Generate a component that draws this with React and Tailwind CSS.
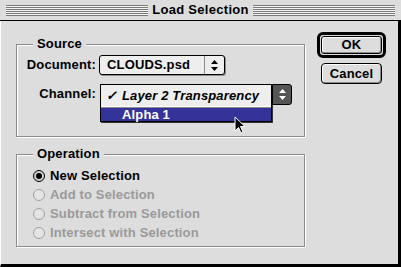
function Arrows({ color = "#000" }) {
  return (
    <svg width="7" height="11" viewBox="0 0 7 11">
      <path d="M3.5 0 L7 4 H0 Z" fill={color} />
      <path d="M0 7 H7 L3.5 11 Z" fill={color} />
    </svg>
  );
}

function Radio({ checked, disabled, label }) {
  return (
    <div className="flex items-center gap-[5px] h-[19px]">
      <div
        className={`w-[12px] h-[12px] rounded-full border flex items-center justify-center ${
          disabled ? "border-[#a0a0a0] bg-[#e4e4e4]" : "border-black bg-[#cfcfcf]"
        }`}
      >
        {checked && <div className="w-[6px] h-[6px] rounded-full bg-black" />}
      </div>
      <span className={disabled ? "text-[#9a9a9a]" : "text-black"}>{label}</span>
    </div>
  );
}

function Group({ title, className, children }) {
  return (
    <div
      className={`relative border border-[#8c8c8c] shadow-[1px_1px_0_#fff,inset_1px_1px_0_#fff] ${className}`}
    >
      <div className="absolute -top-[9px] left-[16px] px-[4px] bg-[#dddddd] leading-[16px]">{title}</div>
      {children}
    </div>
  );
}

function Cursor() {
  return (
    <svg width="12" height="18" viewBox="0 0 12 18" className="absolute left-[234px] top-[116px]">
      <path d="M1 1 V15 L4.5 11.5 L7 17 L9 16 L6.5 10.5 H11 Z" fill="#000" stroke="#fff" strokeWidth="1" />
    </svg>
  );
}

export default function App() {
  return (
    <div
      className="relative w-[401px] h-[267px] bg-[#dddddd] text-[13px] tracking-[0.15px] font-bold text-black overflow-hidden"
      style={{ fontFamily: '"Liberation Sans", Arial, sans-serif' }}
    >
      {/* title bar */}
      <div className="h-[21px] flex items-center px-[6px] border-b border-black bg-[#dddddd]">
        <div className="flex-1 h-[11px] bg-[repeating-linear-gradient(to_bottom,#7a7a7a_0px,#7a7a7a_1px,#f4f4f4_1px,#f4f4f4_2px)]" />
        <div className="px-[4px] text-[13px] tracking-[0.3px]">Load Selection</div>
        <div className="flex-1 h-[11px] bg-[repeating-linear-gradient(to_bottom,#7a7a7a_0px,#7a7a7a_1px,#f4f4f4_1px,#f4f4f4_2px)]" />
      </div>

      {/* body */}
      <div className="h-[246px] flex border-l border-l-white border-r-[3px] border-r-black border-b-[3px] border-b-black">
        <div className="pl-[15px] pt-[23px] flex flex-col gap-[17px]">
          <Group title="Source" className="w-[289px] h-[93px]">
            <div className="flex flex-col pt-[10px] gap-[9px]">
              <div className="flex items-center">
                <div className="w-[82px] text-right pr-[3px]">Document:</div>
                <div className="w-[126px] h-[20px] flex border border-black rounded-[3px] bg-[#eeeeee] shadow-[1px_1px_0_#8c8c8c]">
                  <div className="flex-1 pl-[7px] leading-[18px]">CLOUDS.psd</div>
                  <div className="w-[20px] border-l border-[#8c8c8c] flex items-center justify-center">
                    <Arrows />
                  </div>
                </div>
              </div>
              <div className="flex items-center">
                <div className="w-[82px] text-right pr-[3px]">Channel:</div>
                <div className="w-[172px] h-[20px]" />
              </div>
            </div>
          </Group>
          <Group title="Operation" className="w-[289px] h-[93px]">
            <div className="pl-[16px] pt-[11px]">
              <Radio checked label="New Selection" />
              <Radio disabled label="Add to Selection" />
              <Radio disabled label="Subtract from Selection" />
              <Radio disabled label="Intersect with Selection" />
            </div>
          </Group>
        </div>

        <div className="pl-[12px] pt-[11px] flex flex-col items-start gap-[5px]">
          <div className="w-[69px] h-[26px] border-[3px] border-black rounded-[6px] p-[1px]">
            <div className="h-full border border-black rounded-[3px] bg-[#dddddd] flex items-center justify-center shadow-[inset_-1px_-1px_0_#8c8c8c,inset_1px_1px_0_#fff]">
              OK
            </div>
          </div>
          <div className="ml-[4px] w-[61px] h-[21px] border border-black rounded-[4px] bg-[#dddddd] flex items-center justify-center shadow-[inset_-1px_-1px_0_#8c8c8c,inset_1px_1px_0_#fff]">
            Cancel
          </div>
        </div>
      </div>

      {/* open channel menu */}
      <div className="absolute left-[100px] top-[84px] flex">
        <div className="w-[172px] border border-black bg-[#eeeeee] shadow-[1px_1px_0_#333]">
          <div className="h-[21px] flex items-center pl-[5px] italic">
            <span className="w-[16px]">✓</span>Layer 2 Transparency
          </div>
          <div className="h-[1px] bg-white" />
          <div className="h-[1px] bg-[#8c8c8c]" />
          <div className="h-[13px] bg-[#333399] text-white pl-[21px] leading-[13px]">Alpha 1</div>
        </div>
        <div className="w-[20px] h-[21px] bg-[#555555] border border-black rounded-r-[3px] flex items-center justify-center">
          <Arrows color="#fff" />
        </div>
      </div>
      <Cursor />
    </div>
  );
}
